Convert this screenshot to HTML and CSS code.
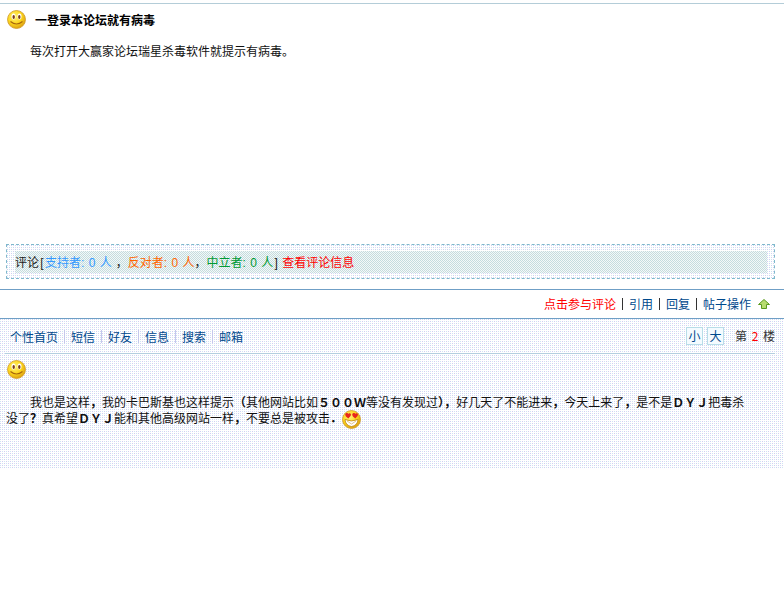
FILE: index.html
```html
<!DOCTYPE html>
<html lang="zh-CN">
<head>
<meta charset="utf-8">
<title>一登录本论坛就有病毒</title>
<link rel="stylesheet" href="styles.css">
</head>
<body>
<svg class="defs" width="0" height="0" aria-hidden="true">
  <defs>
    <radialGradient id="face" cx="40%" cy="35%" r="70%">
      <stop offset="0" stop-color="#fff27a"/>
      <stop offset="0.55" stop-color="#fcd61c"/>
      <stop offset="1" stop-color="#d99a10"/>
    </radialGradient>
    <symbol id="smile" viewBox="0 0 19 19">
      <circle cx="9.5" cy="9.5" r="9" fill="url(#face)" stroke="#cf9a2a" stroke-width="0.8"/>
      <ellipse cx="6.5" cy="6.5" rx="2" ry="3" fill="#fff"/>
      <ellipse cx="12.5" cy="6.5" rx="2" ry="3" fill="#fff"/>
      <ellipse cx="6.7" cy="7" rx="1.2" ry="2" fill="#7a3a10"/>
      <ellipse cx="12.3" cy="7" rx="1.2" ry="2" fill="#7a3a10"/>
      <path d="M3.5 11.5 Q9.5 16.5 15.5 11.5" fill="none" stroke="#a8660c" stroke-width="1.2"/>
    </symbol>
    <symbol id="love" viewBox="0 0 19 19">
      <circle cx="9.5" cy="9.5" r="9" fill="url(#face)" stroke="#cf9a2a" stroke-width="0.8"/>
      <path d="M3.2 4.2 C4 2.6 6 2.8 6.2 4 C6.6 2.8 8.6 2.8 9 4.4 C9 6.2 7 7.4 6.2 8.4 C5 7.4 3 6 3.2 4.2Z" fill="#e8261c"/>
      <path d="M10.2 4.2 C11 2.6 13 2.8 13.2 4 C13.6 2.8 15.6 2.8 16 4.4 C16 6.2 14 7.4 13.2 8.4 C12 7.4 10 6 10.2 4.2Z" fill="#e8261c"/>
      <path d="M3 9.5 Q9.5 12.5 16 9.5 Q15.5 15.5 9.5 16.5 Q3.5 15.5 3 9.5Z" fill="#fff" stroke="#b5760e" stroke-width="0.7"/>
      <path d="M5 11 L9.5 14 L14 11" fill="none" stroke="#d9b26a" stroke-width="0.8"/>
    </symbol>
  </defs>
</svg>

<div class="post-first">
  <div class="post-title">
    <svg class="face" aria-hidden="true"><use href="#smile"/></svg>
    <strong>一登录本论坛就有病毒</strong>
  </div>
  <p class="post-text">每次打开大赢家论坛瑞星杀毒软件就提示有病毒。</p>
</div>

<div class="review">
  <div class="review-inner">评论<span class="br">[</span><span class="pro">支持者<span class="num">: 0 </span>人</span><span class="gap"></span>，<span class="con">反对者<span class="num">: 0 </span>人</span>，<span class="mid">中立者<span class="num">: 0 </span>人</span><span class="br">]</span><a class="red more">查看评论信息</a></div>
</div>

<div class="actions">
  <a class="red">点击参与评论</a>
  <i class="bar"></i><a>引用</a>
  <i class="bar"></i><a>回复</a>
  <i class="bar"></i><a>帖子操作</a>
  <svg class="arrow" viewBox="0 0 12 10" aria-hidden="true"><path d="M6 .5 11.5 5.5H8.5V9.5H3.5V5.5H.5Z" fill="#b8dc70" stroke="#5c9a20" stroke-width="1"/></svg>
</div>

<div class="post-second">
  <div class="toolbar">
    <nav class="nav">
      <a>个性首页</a><a>短信</a><a>好友</a><a>信息</a><a>搜索</a><a>邮箱</a>
    </nav>
    <div class="floor">
      <a class="size">小</a>
      <a class="size">大</a>
      <span class="floor-no">第 <b>2</b> 楼</span>
    </div>
  </div>
  <svg class="face face-second" aria-hidden="true"><use href="#smile"/></svg>
  <p class="reply">我也是这样<span class="wide">，</span>我的卡巴斯基也这样提示<span class="wide">（</span>其他网站比如<span class="wide">５００Ｗ</span>等没有发现过<span class="wide">），</span>好几天了不能进来<span class="wide">，</span>今天上来了<span class="wide">，</span>是不是<span class="wide">ＤＹＪ</span>把毒杀没了<span class="wide">？</span>真希望<span class="wide">ＤＹＪ</span>能和其他高级网站一样<span class="wide">，</span>不要总是被攻击<span class="wide">．</span><svg class="face face-inline" aria-hidden="true"><use href="#love"/></svg></p>
</div>
</body>
</html>
```
FILE: styles.css
```css
html, body {
  margin: 0;
  padding: 0;
  background: #fff;
}
body {
  font: 12px/16px "Noto Sans CJK SC", "Liberation Sans", sans-serif;
  color: #111;
}
.defs {
  position: absolute;
}
a {
  color: #00498c;
  text-decoration: none;
}
a.red {
  color: #f00;
}
.face {
  display: block;
  width: 19px;
  height: 19px;
  flex: none;
}
.post-first {
  margin-top: 3px;
  height: 241px;
  border-top: 1px solid #b4cdd8;
  box-sizing: border-box;
  padding: 6px 7px 0;
}
.post-title {
  display: flex;
  align-items: center;
  gap: 9px;
  height: 19px;
  font-size: 12px;
  color: #000;
}
.post-text {
  margin: 14px 0 0 23px;
}
.review {
  margin: 0 9px 0 6px;
  height: 35px;
  box-sizing: border-box;
  border: 1px dashed #7fb8cc;
  padding: 6px 7px 5px 8px;
  background: url("data:image/svg+xml,%3Csvg xmlns='http://www.w3.org/2000/svg' width='4' height='4' shape-rendering='crispEdges'%3E%3Crect width='4' height='4' fill='%23fff'/%3E%3Crect width='1' height='1' fill='%23d2cef2'/%3E%3Crect x='2' y='2' width='1' height='1' fill='%23d2cef2'/%3E%3Crect x='2' width='1' height='1' fill='%23cee6f2'/%3E%3Crect y='2' width='1' height='1' fill='%23cee6f2'/%3E%3C/svg%3E");
}
.review-inner {
  height: 22px;
  line-height: 22px;
  white-space: nowrap;
  color: #222;
  background: url("data:image/svg+xml,%3Csvg xmlns='http://www.w3.org/2000/svg' width='2' height='2' shape-rendering='crispEdges'%3E%3Crect width='2' height='2' fill='%23f4f8f8'/%3E%3Crect width='1' height='1' fill='%23c4dcde'/%3E%3Crect x='1' y='1' width='1' height='1' fill='%23c4dcde'/%3E%3C/svg%3E");
}
.br {
  display: inline-block;
  width: 6px;
  text-align: center;
  font-family: "Liberation Sans", sans-serif;
}
.num {
  font-family: "Liberation Sans", sans-serif;
  word-spacing: 1px;
  white-space: pre;
}
.gap {
  display: inline-block;
  width: 4px;
}
.more {
  margin-left: 3px;
}
.pro { color: #3399ff; }
.con { color: #ff6600; }
.mid { color: #009933; }
.actions {
  margin-top: 10px;
  height: 29px;
  box-sizing: border-box;
  border-top: 1px solid #6f9fc6;
  display: flex;
  align-items: center;
  justify-content: flex-end;
  padding-right: 14px;
}
.bar {
  width: 1px;
  height: 12px;
  margin: 0 6px;
  background: #333;
}
.arrow {
  width: 12px;
  height: 10px;
  margin-left: 7px;
}
.post-second {
  height: 151px;
  box-sizing: border-box;
  border-top: 1px solid #6f9fc6;
  background: url("data:image/svg+xml,%3Csvg xmlns='http://www.w3.org/2000/svg' width='4' height='4' shape-rendering='crispEdges'%3E%3Crect width='4' height='4' fill='%23fff'/%3E%3Crect width='1' height='1' fill='%23d2cef2'/%3E%3Crect x='2' y='2' width='1' height='1' fill='%23d2cef2'/%3E%3Crect x='2' width='1' height='1' fill='%23cee6f2'/%3E%3Crect y='2' width='1' height='1' fill='%23cee6f2'/%3E%3C/svg%3E");
}
.toolbar {
  margin: 0 9px 0 5px;
  height: 35px;
  box-sizing: border-box;
  border-bottom: 1px solid #b4cfe0;
  display: flex;
  align-items: center;
  justify-content: space-between;
  padding: 0 0 0 5px;
}
.nav {
  display: flex;
}
.nav a {
  padding: 0 6px;
  line-height: 13px;
  border-left: 1px solid #c4c8ec;
}
.nav a:first-child {
  padding-left: 0;
  border-left: 0;
}
.floor {
  display: flex;
  align-items: center;
}
.size {
  width: 15px;
  height: 16px;
  line-height: 16px;
  text-align: center;
  border: 1px solid #b8dde8;
  margin-right: 4px;
  background: #f4fbff;
}
.floor-no {
  margin-left: 7px;
  color: #333;
  word-spacing: 2px;
}
.floor-no b {
  font-weight: 400;
  color: #f00;
}
.face-second {
  margin: 6px 0 0 7px;
}
.reply {
  margin: 15px 30px 0 6px;
  text-indent: 24px;
  color: #111;
}
.wide {
  font-weight: 700;
}
.face-inline {
  display: inline-block;
  vertical-align: middle;
  margin: -3px 0 -3px 0;
}
```
